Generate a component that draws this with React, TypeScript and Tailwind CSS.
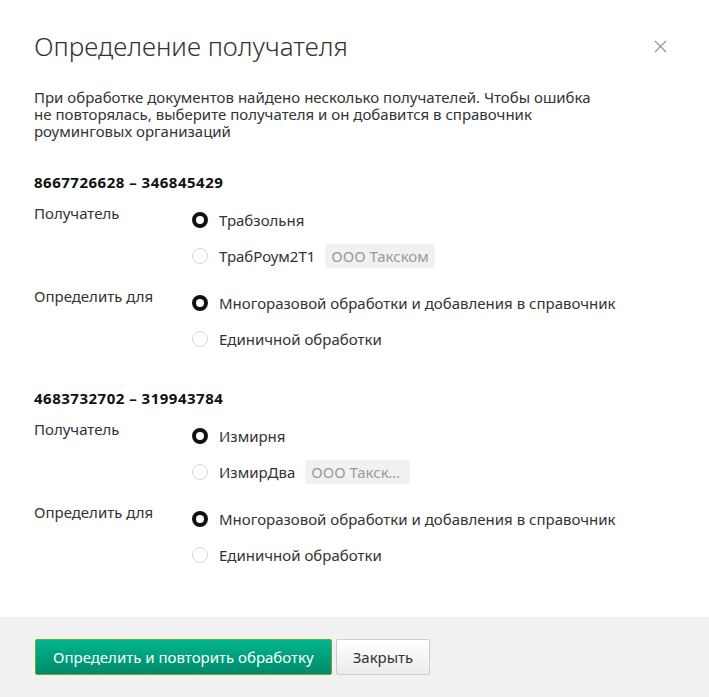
import React, { useState } from 'react';

interface Group {
  id: string;
  title: string;
  recipients: { name: string; tag?: string; narrowTag?: boolean }[];
}

const groups: Group[] = [
  {
    id: 'a',
    title: '8667726628 – 346845429',
    recipients: [{ name: 'Трабзольня' }, { name: 'ТрабРоум2Т1', tag: 'ООО Такском' }],
  },
  {
    id: 'b',
    title: '4683732702 – 319943784',
    recipients: [{ name: 'Измирня' }, { name: 'ИзмирДва', tag: 'ООО Такском Регион', narrowTag: true }],
  },
];

const modes = ['Многоразовой обработки и добавления в справочник', 'Единичной обработки'];

const Radio = ({ checked }: { checked: boolean }) => (
  <span
    className={
      checked
        ? 'w-4 h-4 rounded-full border-[4px] border-[#111] bg-white shrink-0'
        : 'w-4 h-4 rounded-full border border-[#d6d6d6] bg-white shrink-0'
    }
  />
);

const App: React.FC = () => {
  const [recipient, setRecipient] = useState<{ [key: string]: number }>({ a: 0, b: 0 });
  const [mode, setMode] = useState<{ [key: string]: number }>({ a: 0, b: 0 });

  return (
    <div className="w-[709px] h-[697px] bg-white flex flex-col text-[#333] font-['Noto_Sans','Open_Sans',sans-serif]">
      {/* Header */}
      <div className="flex items-start justify-between pl-[34px] pr-[42px] pt-[28px]">
        <h1 className="text-[26px] font-light leading-[36px] text-[#333]">Определение получателя</h1>
        <button className="mt-[12px] text-[#999]" aria-label="Закрыть">
          <svg width="13" height="13" viewBox="0 0 13 13" fill="none" stroke="currentColor" strokeWidth="1.4">
            <path d="M1 1L12 12M12 1L1 12" />
          </svg>
        </button>
      </div>

      {/* Body */}
      <div className="flex-1 px-[34px] pt-[25px]">
        <p className="text-[15px] leading-[17px] w-[560px]">
          При обработке документов найдено несколько получателей. Чтобы ошибка не повторялась, выберите получателя и он добавится в справочник роуминговых организаций
        </p>

        {groups.map((g, gi) => (
          <div key={g.id} className={gi === 0 ? 'mt-[32px]' : 'mt-[39px]'}>
            <h3 className="text-[15px] font-bold leading-[20px] text-[#111] tracking-[0.5px]">{g.title}</h3>

            <div className="flex mt-[11px]">
              <div className="w-[158px] text-[15px] leading-[20px]">Получатель</div>
              <div className="flex flex-col gap-[16px] pt-[7px]">
                {g.recipients.map((r, i) => (
                  <button
                    key={r.name}
                    onClick={() => setRecipient(prev => ({ ...prev, [g.id]: i }))}
                    className="flex items-center gap-[11px] h-[20px] text-left"
                  >
                    <Radio checked={recipient[g.id] === i} />
                    <span className="text-[15px]">{r.name}</span>
                    {r.tag && (
                      <span
                        className={
                          r.narrowTag
                            ? 'ml-[-1px] inline-block max-w-[105px] h-[24px] px-[6px] leading-[24px] bg-[#f1f1f1] rounded text-[15px] text-[#999] truncate'
                            : 'ml-[-1px] inline-block h-[24px] px-[6px] leading-[24px] bg-[#f1f1f1] rounded text-[15px] text-[#999] whitespace-nowrap'
                        }
                      >
                        {r.tag}
                      </span>
                    )}
                  </button>
                ))}
              </div>
            </div>

            <div className="flex mt-[20px]">
              <div className="w-[158px] text-[15px] leading-[20px]">Определить для</div>
              <div className="flex flex-col gap-[16px] pt-[7px]">
                {modes.map((m, i) => (
                  <button
                    key={m}
                    onClick={() => setMode(prev => ({ ...prev, [g.id]: i }))}
                    className="flex items-center gap-[11px] h-[20px] text-left"
                  >
                    <Radio checked={mode[g.id] === i} />
                    <span className="text-[15px]">{m}</span>
                  </button>
                ))}
              </div>
            </div>
          </div>
        ))}
      </div>

      {/* Footer */}
      <div className="h-[80px] bg-[#f1f1f1] flex items-center gap-[4px] px-[35px]">
        <button className="h-[36px] px-[17px] rounded-[2px] border border-[#6ea82a] bg-gradient-to-b from-[#00b68f] to-[#008a6a] text-white text-[15px]">
          Определить и повторить обработку
        </button>
        <button className="h-[36px] px-[16px] rounded-[2px] border border-[#ccc] bg-gradient-to-b from-white to-[#ececec] text-[#333] text-[15px]">
          Закрыть
        </button>
      </div>
    </div>
  );
};

export default App;
